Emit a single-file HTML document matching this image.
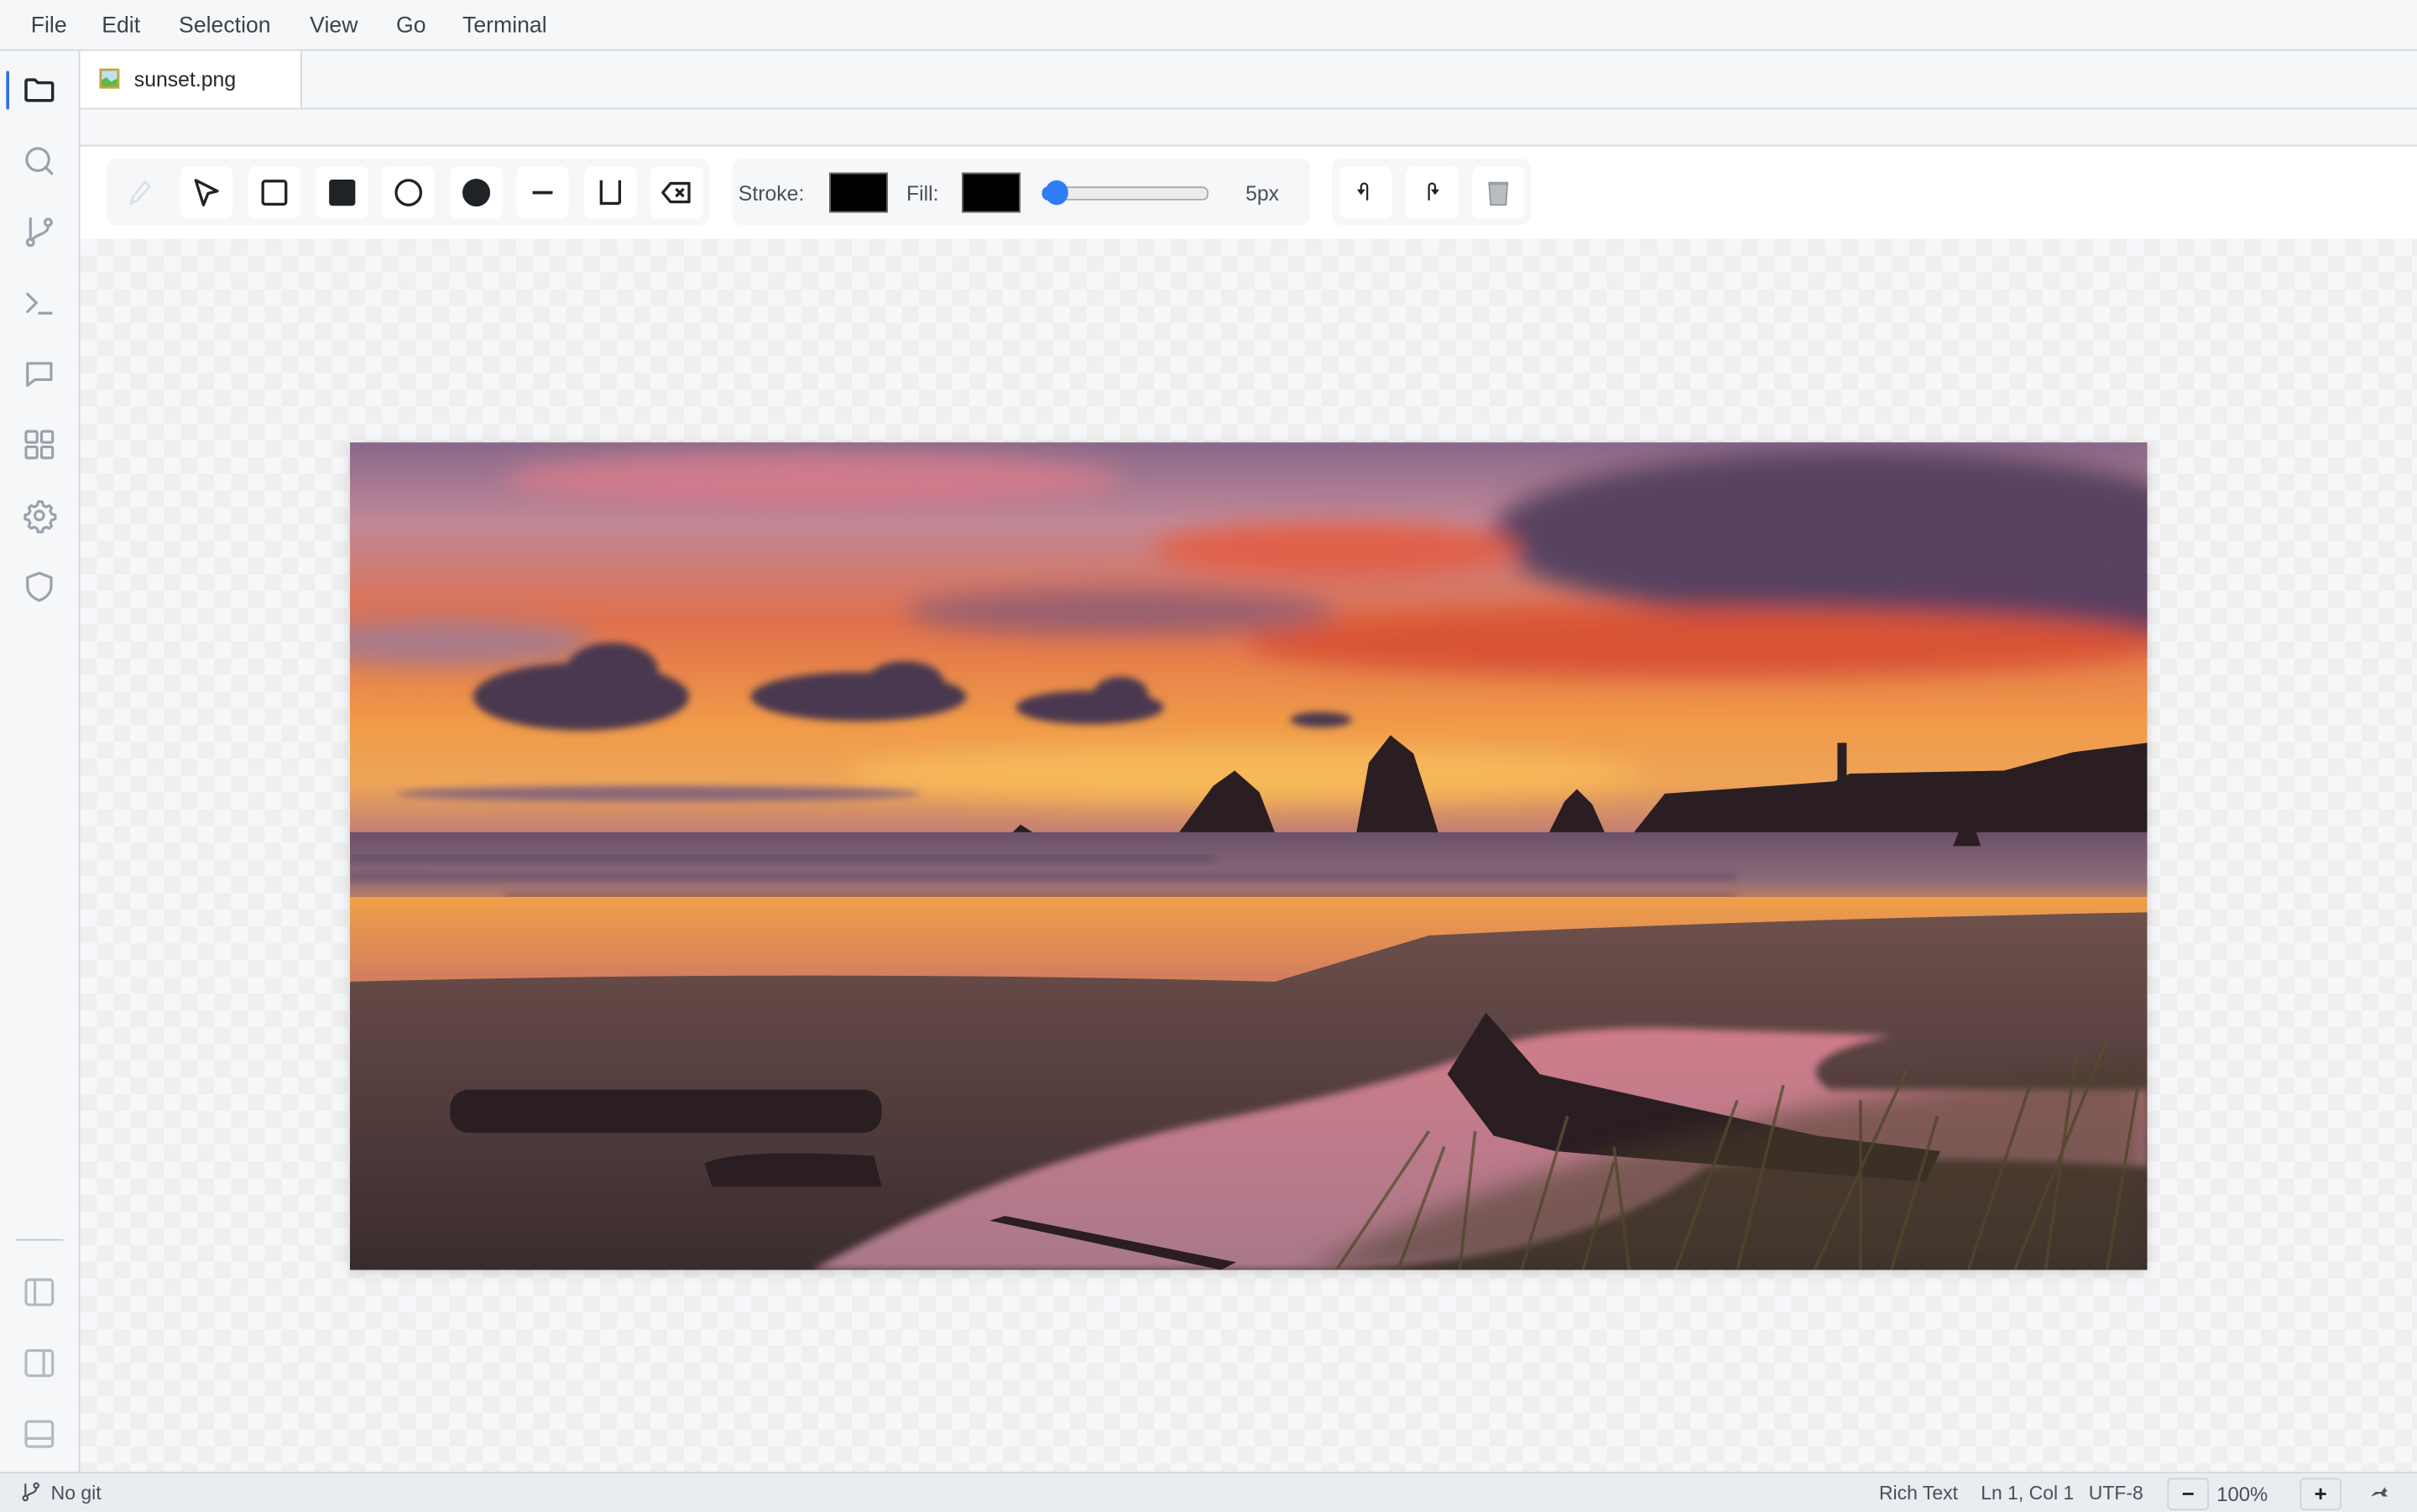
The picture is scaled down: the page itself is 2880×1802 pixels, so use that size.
<!DOCTYPE html>
<html><head><meta charset="utf-8"><style>
html,body{margin:0;padding:0;width:2880px;height:1800px;overflow:hidden;background:#f6f7f9}
#w{position:absolute;left:0;top:0;width:1568px;height:980px;transform:scale(1.83673);transform-origin:0 0;font-family:"Liberation Sans",sans-serif;color:#3a3f47;background:#f6f7f9}
.abs{position:absolute}
.menu{top:0;left:0;width:1568px;height:32px;border-bottom:1px solid #d3d8df;background:#f6f7f9}
.menu span{position:absolute;top:9px;font-size:14.5px;color:#3d424a}
.act{top:33px;left:0;width:51px;height:922px;border-right:1px solid #d3d8df;background:#f6f7f9}
.act svg{position:absolute;left:14px;width:23px;height:23px;fill:none;stroke:#9aa1ab;stroke-width:1.8;stroke-linecap:round;stroke-linejoin:round}
.tabs{top:33px;left:52px;width:1516px;height:37px;border-bottom:1px solid #d3d8df}
.tab{position:absolute;left:0;top:0;width:143px;height:37px;background:#fff;border-right:1px solid #d3d8df}
.strip{top:71px;left:52px;width:1516px;height:23px;border-bottom:1px solid #d3d8df;background:#f6f7f9}
.tb{top:95px;left:52px;width:1516px;height:60px;background:#fff}
.grp{position:absolute;top:8px;height:43px;background:#f6f7f9;border-radius:6px}
.btn{position:absolute;top:5px;width:34px;height:34px;background:#fff;border-radius:5px}
.btn svg{position:absolute;left:7px;top:7px;width:20px;height:20px}
.canvas{top:155px;left:52px;width:1516px;height:800px;background-color:#f6f7f9;background-image:linear-gradient(45deg,#efefef 25%,transparent 25%,transparent 75%,#efefef 75%),linear-gradient(45deg,#efefef 25%,transparent 25%,transparent 75%,#efefef 75%);background-size:21.78px 21.78px;background-position:0 0,10.89px 10.89px}
.status{top:955px;left:0;width:1568px;height:25px;background:#e9ecf1;border-top:1px solid #d3d8df;font-size:12.5px;color:#4a4f57}
.status span{position:absolute;top:6px}
.sbtn{position:absolute;top:3px;width:25px;height:19px;border:1px solid #cfd4db;border-radius:3px;text-align:center;font-weight:bold;font-size:14px;line-height:18px;color:#222}
</style></head><body><div id="w">
<div class="abs menu"><span style="left:20px">File</span><span style="left:66px">Edit</span><span style="left:116px">Selection</span><span style="left:201px">View</span><span style="left:257px">Go</span><span style="left:300px">Terminal</span></div>

<div class="abs act">
<div class="abs" style="left:4px;top:13px;width:2px;height:25px;background:#2f6fe0;border-radius:1px"></div>
<svg style="top:14px;stroke:#23272e;stroke-width:2" viewBox="0 0 24 24"><path d="M3 6a1 1 0 0 1 1-1h5l2 2h9a1 1 0 0 1 1 1v10a1 1 0 0 1-1 1H4a1 1 0 0 1-1-1z"/></svg>
<svg style="top:60px" viewBox="0 0 24 24"><circle cx="11" cy="11" r="7.5"/><path d="M16.5 16.5l4 4"/></svg>
<svg style="top:106px" viewBox="0 0 24 24"><circle cx="6" cy="19" r="2.2"/><circle cx="18" cy="5.5" r="2.2"/><path d="M6 3v14M18 8c0 6-8 5-11 9.5"/></svg>
<svg style="top:152px" viewBox="0 0 24 24"><path d="M4 6l6 6-6 6M12 19h8"/></svg>
<svg style="top:198px" viewBox="0 0 24 24"><path d="M4 5h16v11H9l-5 4z"/></svg>
<svg style="top:244px" viewBox="0 0 24 24"><rect x="3" y="3" width="7.5" height="7.5" rx="1"/><rect x="13.5" y="3" width="7.5" height="7.5" rx="1"/><rect x="3" y="13.5" width="7.5" height="7.5" rx="1"/><rect x="13.5" y="13.5" width="7.5" height="7.5" rx="1"/></svg>
<svg style="top:290px" viewBox="0 0 24 24"><circle cx="12" cy="12" r="3"/><path d="M12 2.5l2 .3.6 2.3 2 1.1 2.2-.9 1.5 1.5-.9 2.2 1.1 2 2.3.6v2.8l-2.3.6-1.1 2 .9 2.2-1.5 1.5-2.2-.9-2 1.1-.6 2.3h-2.8l-.6-2.3-2-1.1-2.2.9-1.5-1.5.9-2.2-1.1-2-2.3-.6v-2.8l2.3-.6 1.1-2-.9-2.2 1.5-1.5 2.2.9 2-1.1.6-2.3z"/></svg>
<svg style="top:336px" viewBox="0 0 24 24"><path d="M12 3l8 3v6c0 5-4 8-8 9.5C8 20 4 17 4 12V6z"/></svg>
<div class="abs" style="left:10px;top:771px;width:31px;height:1px;background:#c3c8cf"></div>
<svg style="top:794px;stroke:#b3b9c1" viewBox="0 0 24 24"><rect x="3" y="3.5" width="18" height="17" rx="2"/><path d="M9 3.5v17"/></svg>
<svg style="top:840px;stroke:#b3b9c1" viewBox="0 0 24 24"><rect x="3" y="3.5" width="18" height="17" rx="2"/><path d="M15 3.5v17"/></svg>
<svg style="top:886px;stroke:#b3b9c1" viewBox="0 0 24 24"><rect x="3" y="3.5" width="18" height="17" rx="2"/><path d="M3 15h18"/></svg>
</div>

<div class="abs tabs"><div class="tab">
<svg class="abs" style="left:12px;top:11px" width="14" height="14" viewBox="0 0 14 14"><rect x="0.5" y="0.5" width="13" height="13" fill="#c9a23a"/><rect x="2" y="2" width="10" height="10" fill="#bfe0f2"/><path d="M2 12V8l3-2 3 3 4-2v5z" fill="#5bb84a"/></svg>
<span class="abs" style="left:35px;top:11px;font-size:13.5px;color:#23272e">sunset.png</span></div></div>
<div class="abs strip"></div>

<div class="abs tb">
<div class="grp" style="left:17px;width:391px">
 <div class="btn" style="left:5px;background:transparent"><svg viewBox="0 0 20 20" fill="none" stroke="#dde1e6" stroke-width="1.6"><path d="M13 3l3 3-8 9-4 2 1-4z"/></svg></div>
 <div class="btn" style="left:48px"><svg viewBox="0 0 20 20" fill="none" stroke="#1f2328" stroke-width="1.8" stroke-linejoin="round"><path d="M3 2l14 7-6 1.5L8 18z"/></svg></div>
 <div class="btn" style="left:92px"><svg viewBox="0 0 20 20" fill="none" stroke="#1f2328" stroke-width="1.8"><rect x="2.5" y="2.5" width="15" height="15" rx="1.5"/></svg></div>
 <div class="btn" style="left:136px"><svg viewBox="0 0 20 20"><rect x="1.5" y="1.5" width="17" height="17" rx="2" fill="#1f2328"/></svg></div>
 <div class="btn" style="left:179px"><svg viewBox="0 0 20 20" fill="none" stroke="#1f2328" stroke-width="1.8"><circle cx="10" cy="10" r="8"/></svg></div>
 <div class="btn" style="left:223px"><svg viewBox="0 0 20 20"><circle cx="10" cy="10" r="9" fill="#1f2328"/></svg></div>
 <div class="btn" style="left:266px"><svg viewBox="0 0 20 20"><rect x="3.5" y="9" width="13" height="2" fill="#1f2328"/></svg></div>
 <div class="btn" style="left:310px"><svg viewBox="0 0 20 20" fill="none" stroke="#1f2328" stroke-width="1.8"><path d="M4 2v15h12M16 17V2"/></svg></div>
 <div class="btn" style="left:353px"><svg viewBox="0 0 20 20" fill="none" stroke="#1f2328" stroke-width="1.8" stroke-linejoin="round"><path d="M6 4h12v12H6L1 10z"/><path d="M9.5 7.5l5 5M14.5 7.5l-5 5"/></svg></div>
</div>
<div class="grp" style="left:423px;width:375px;font-size:13.5px;color:#4a4f57">
 <span class="abs" style="left:4px;top:15px">Stroke:</span>
 <div class="abs" style="left:63px;top:9px;width:36px;height:24px;background:#000;border:1.5px solid #666"></div>
 <span class="abs" style="left:113px;top:15px">Fill:</span>
 <div class="abs" style="left:149px;top:9px;width:36px;height:24px;background:#000;border:1.5px solid #666"></div>
 <div class="abs" style="left:201px;top:18px;width:106px;height:7px;background:#ececec;border:1px solid #aaa;border-radius:4px"></div>
 <div class="abs" style="left:201px;top:18px;width:12px;height:9px;background:#2f7cf6;border-radius:4px"></div>
 <div class="abs" style="left:203px;top:14px;width:15px;height:16px;background:#2f7cf6;border-radius:50%"></div>
 <span class="abs" style="left:333px;top:15px">5px</span>
</div>
<div class="grp" style="left:812px;width:129px">
 <div class="btn" style="left:5px"><svg viewBox="0 0 20 20" fill="none" stroke="#222" stroke-width="1.2"><path d="M11 15V6a2 2 0 0 0-4 0v3"/><path d="M5.5 8.5h3L7 10.5z" fill="#222"/></svg></div>
 <div class="btn" style="left:48px"><svg viewBox="0 0 20 20" fill="none" stroke="#222" stroke-width="1.2"><path d="M8 15V6a2 2 0 0 1 4 0v3"/><path d="M10.5 8.5h3L12 10.5z" fill="#222"/></svg></div>
 <div class="btn" style="left:91px"><svg viewBox="0 0 20 20"><path d="M4 4h12l-1 14H5z" fill="#b9bcc0" stroke="#8a8e93" stroke-width=".8"/><rect x="3.5" y="3" width="13" height="2" fill="#9a9ea3"/></svg></div>
</div>
</div>

<div class="abs canvas"></div>

<div class="abs" style="left:227px;top:287px;width:1166px;height:537px;box-shadow:0 2px 8px rgba(0,0,0,.15)">
<svg width="1166" height="537" viewBox="0 0 1166 537" preserveAspectRatio="none">
<defs>
<linearGradient id="sky" x1="0" y1="0" x2="0" y2="1">
<stop offset="0" stop-color="#8a6888"/><stop offset=".2" stop-color="#c08898"/><stop offset=".45" stop-color="#e0704c"/><stop offset=".7" stop-color="#f09a48"/><stop offset=".85" stop-color="#eea458"/><stop offset="1" stop-color="#b87878"/></linearGradient>
<linearGradient id="sea" x1="0" y1="0" x2="0" y2="1"><stop offset="0" stop-color="#6a5068"/><stop offset=".6" stop-color="#8a6a7a"/><stop offset="1" stop-color="#d88a58"/></linearGradient>
<linearGradient id="wet" x1="0" y1="0" x2="0" y2="1"><stop offset="0" stop-color="#f0a048"/><stop offset="1" stop-color="#d07a60"/></linearGradient>
<linearGradient id="sand" x1="0" y1="0" x2="0" y2="1"><stop offset="0" stop-color="#6e504c"/><stop offset="1" stop-color="#3a2c2e"/></linearGradient>
<linearGradient id="pool" x1="0" y1="0" x2="0" y2="1"><stop offset="0" stop-color="#d07c8a"/><stop offset="1" stop-color="#a8788a"/></linearGradient>
<filter id="b"><feGaussianBlur stdDeviation="8"/></filter>
<filter id="b2"><feGaussianBlur stdDeviation="2.5"/></filter>
</defs>
<rect width="1166" height="260" fill="url(#sky)"/>
<g filter="url(#b)">
<ellipse cx="980" cy="60" rx="240" ry="55" fill="#564260"/>
<ellipse cx="1100" cy="110" rx="120" ry="30" fill="#5a4060"/>
<ellipse cx="640" cy="70" rx="120" ry="18" fill="#e2604a"/>
<ellipse cx="880" cy="130" rx="300" ry="22" fill="#d85236"/>
<ellipse cx="500" cy="110" rx="140" ry="15" fill="#9a6070"/>
<ellipse cx="300" cy="25" rx="200" ry="18" fill="#d07c8c"/>
<ellipse cx="60" cy="130" rx="100" ry="15" fill="#a87a8a"/>
<ellipse cx="580" cy="215" rx="260" ry="18" fill="#f6b858"/>
</g>
<g filter="url(#b2)" fill="#4a3850">
<ellipse cx="150" cy="165" rx="70" ry="22"/><ellipse cx="170" cy="148" rx="30" ry="18"/>
<ellipse cx="330" cy="165" rx="70" ry="16"/><ellipse cx="360" cy="155" rx="25" ry="13"/>
<ellipse cx="480" cy="172" rx="48" ry="11"/><ellipse cx="500" cy="164" rx="18" ry="12"/>
<ellipse cx="630" cy="180" rx="20" ry="5"/>
<ellipse cx="200" cy="228" rx="170" ry="5" fill="#8a6878"/>
</g>
<rect y="253" width="1166" height="50" fill="url(#sea)"/>
<g stroke="#4a3450" stroke-width="3" opacity=".55" filter="url(#b2)"><path d="M0 270h560M0 282h900M100 295h800"/></g>
<rect y="295" width="1166" height="60" fill="url(#wet)"/>
<path d="M0 350 Q300 342 600 350 L700 320 Q900 310 1166 305 V537 H0z" fill="url(#sand)"/>
<path d="M720 400 Q760 380 850 380 L1000 385 Q930 400 960 420 L1166 420 V470 Q1000 460 880 470 Q800 530 640 537 H300 Q420 470 560 440 Q660 420 720 400z" fill="url(#pool)" filter="url(#b2)"/>
<g fill="#2a1e22">
<path d="M538 253l22-30 14-10 16 14 10 26z"/>
<path d="M653 253l8-45 14-18 15 12 8 25 8 26z"/>
<path d="M778 253l10-20 8-8 10 10 8 18z"/>
<path d="M833 253l20-25 110-8 10-5 100-2 45-12 48-6v58z"/>
<rect x="965" y="195" width="6" height="24"/>
<path d="M430 253l5-5 8 5z"/>
<path d="M1040 262l10-25 8 25z"/>
<rect x="65" y="420" width="280" height="28" rx="12"/>
<path d="M230 468q20-10 110-5l5 20h-110z"/>
<path d="M712 410l25-40 35 40 180 40 80 10-10 20-240-20-40-10z"/>
<path d="M415 505l10-3 150 30-10 5z"/>
</g>
<g stroke="#5a5030" stroke-width="2" opacity=".8"><path d="M640 537l60-90M680 537l30-80M720 537l10-90M760 537l30-100M800 537l20-70M860 537l40-110M900 537l30-120M950 537l60-130M1000 537l30-100M1050 537l40-120M1100 537l20-140M1140 537l20-120M1080 537l60-150M980 537l0-110M830 537l-10-80"/></g>
<path d="M620 537 Q800 440 1166 400 V537z" fill="#4a3c2a" opacity=".55" filter="url(#b)"/>
</svg></div>

<div class="abs status">
<svg class="abs" style="left:13px;top:5px" width="14" height="14" viewBox="0 0 24 24" fill="none" stroke="#4a4f57" stroke-width="2"><circle cx="6" cy="19" r="2.5"/><circle cx="18" cy="5" r="2.5"/><path d="M6 3v13M18 8c0 6-8 5-10.5 9"/></svg>
<span style="left:33px">No git</span>
<span style="left:1219px">Rich Text</span>
<span style="left:1285px">Ln 1, Col 1</span>
<span style="left:1355px">UTF-8</span>
<div class="sbtn" style="left:1406px">−</div>
<span style="left:1438px;font-size:13px">100%</span>
<div class="sbtn" style="left:1492px">+</div>
<svg class="abs" style="left:1537px;top:8px" width="13" height="8" viewBox="0 0 13 8"><path d="M1 7l3-3 4 0 2-3 1 2 1 0-2 2 2 2H9L7 5 4 6z" fill="#555"/></svg>
</div>
</div></body></html>
